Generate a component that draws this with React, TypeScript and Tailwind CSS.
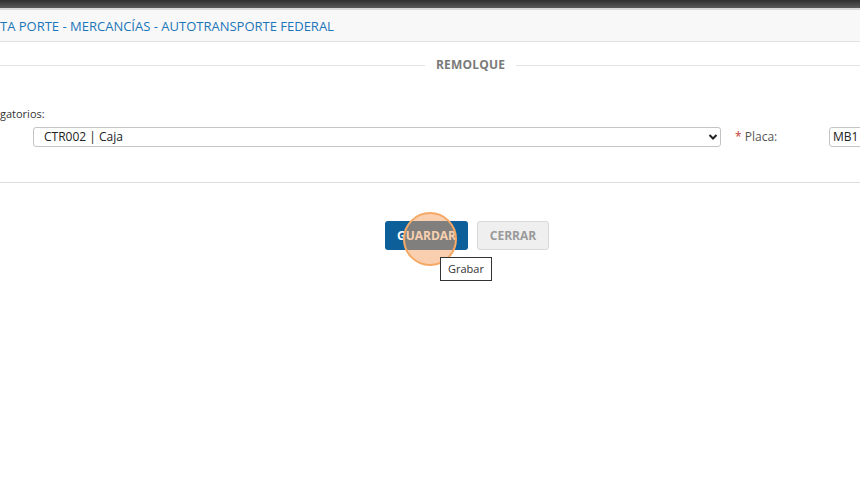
const FONT = { fontFamily: '"Open Sans", "Noto Sans", Arial, sans-serif' }

function Legend({ title }: { readonly title: string }) {
  return (
    <div className="flex items-center h-[14px]">
      <div className="w-[425px] h-px bg-[#e2e2e2]" />
      <span className="px-[11px] text-[12px] font-bold tracking-[0.2px] text-[#7a7a7a] leading-none">{title}</span>
      <div className="flex-1 h-px bg-[#e2e2e2]" />
    </div>
  )
}

export default function App() {
  return (
    <div className="relative w-[860px] h-[481px] overflow-hidden bg-white" style={FONT}>
      {/* window chrome */}
      <div className="h-[8px] bg-gradient-to-b from-[#2f2f2f] to-[#5a5a5a]" />
      <div className="h-[2px] bg-[#d9d9d9]" />

      {/* header */}
      <div className="h-[32px] flex items-center pt-[3px] bg-[#f8f8f8] border-b border-[#e2e2e2]">
        <span className="text-[13px] text-[#1b76b9] whitespace-nowrap">
          TA PORTE - MERCANCÍAS - AUTOTRANSPORTE FEDERAL
        </span>
      </div>

      <div className="pt-[16px]">
        <Legend title="REMOLQUE" />
      </div>

      <div className="mt-[36px] text-[11px] text-[#333] leading-none">gatorios:</div>

      {/* fields */}
      <div className="mt-[8px] flex items-center h-[20px]">
        <div className="shrink-0 ml-[33px] w-[688px] h-[20px] flex items-center justify-between border border-[#c4c4c4] rounded-[3px] bg-white pl-[10px] pr-[2px] text-[12px] text-[#222]">
          <span>CTR002 | Caja</span>
          <svg width="10" height="8" viewBox="0 0 10 8">
            <path d="M1.5 2 L5 5.5 L8.5 2" fill="none" stroke="#222" strokeWidth="2" />
          </svg>
        </div>
        <div className="shrink-0 ml-[14px] w-[94px] text-[12px] text-[#555] whitespace-nowrap">
          <span className="text-[#c0392b]">*</span> Placa:
        </div>
        <div className="shrink-0 w-[120px] h-[20px] flex items-center border border-[#c4c4c4] rounded-[3px] px-[3px] text-[12px] text-[#222]">
          MB1
        </div>
      </div>

      <div className="mt-[35px] h-px bg-[#dedede]" />

      {/* actions */}
      <div className="mt-[38px] flex justify-center gap-[9px] pl-[74px]">
        <button className="w-[83px] h-[29px] rounded-[3px] bg-[#0c5f98] text-white text-[12px] font-bold">
          GUARDAR
        </button>
        <button className="w-[72px] h-[29px] rounded-[3px] bg-[#efefef] border border-[#d8d8d8] text-[#9a9a9a] text-[12px] font-bold">
          CERRAR
        </button>
      </div>

      {/* click highlight */}
      <div className="absolute left-[403px] top-[212px] w-[54px] h-[54px] rounded-full border-2 border-[#f6a865] bg-[#f4a062]/50" />

      {/* tooltip */}
      <div className="absolute left-[440px] top-[257px] w-[52px] h-[24px] flex items-center justify-center bg-white border border-[#333] text-[11px] text-[#333]">
        Grabar
      </div>
    </div>
  )
}
